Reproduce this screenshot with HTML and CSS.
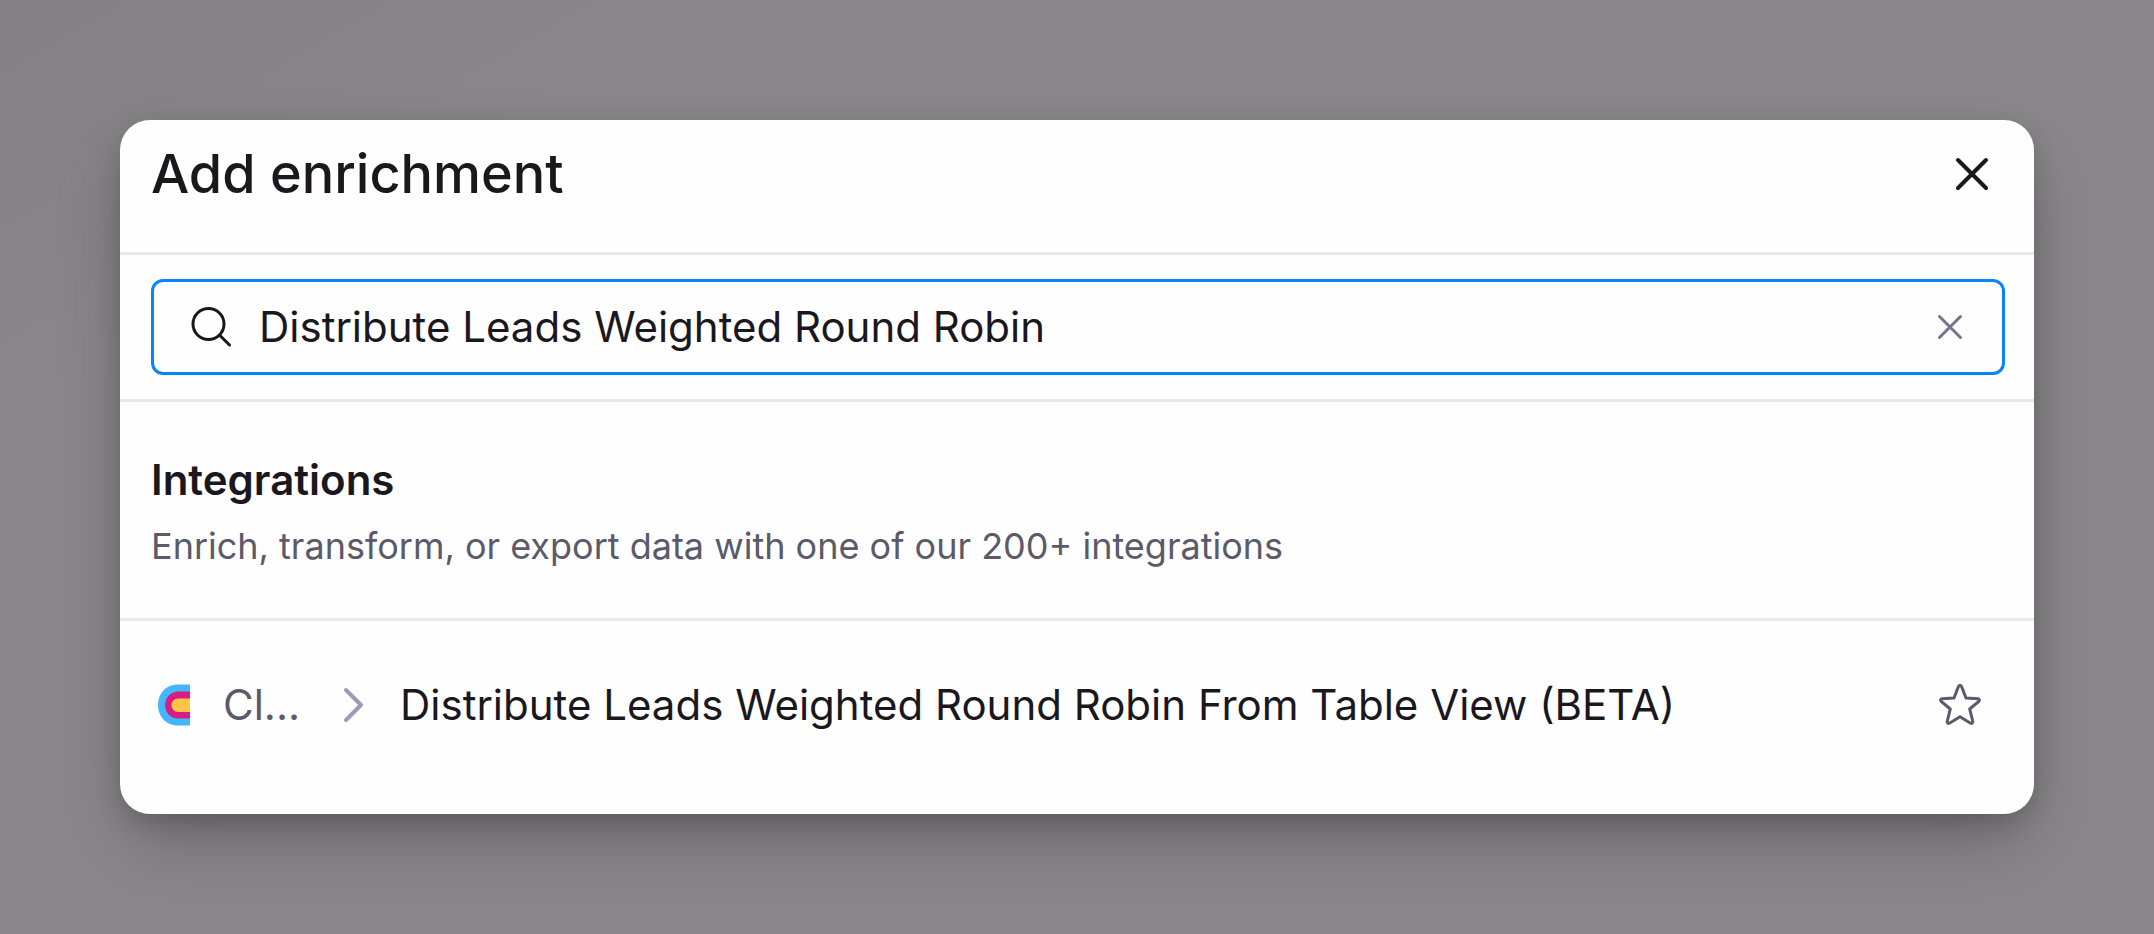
FILE: index.html
```html
<!DOCTYPE html>
<html lang="en">
<head>
<meta charset="utf-8">
<meta name="viewport" content="width=device-width, initial-scale=1">
<title>Add enrichment</title>
<link rel="stylesheet" href="styles.css">
</head>
<body>
<main class="backdrop">
  <section class="dialog" role="dialog" aria-labelledby="dialog-title">
    <header class="dialog-header">
      <h1 class="dialog-title" id="dialog-title">Add enrichment</h1>
      <button class="icon-button close" type="button" aria-label="Close">
        <svg width="40" height="40" viewBox="0 0 40 40"><path d="M6 6 34 34M34 6 6 34"/></svg>
      </button>
    </header>
    <div class="search-section">
      <div class="search-box">
        <label class="search-label" for="search" aria-label="Search enrichments">
          <svg width="42" height="42" viewBox="0 0 42 42"><circle cx="18.500" cy="18" r="15.500"/><path d="M29.500 29 39.500 39"/></svg>
        </label>
        <input class="search-input" id="search" type="text" value="Distribute Leads Weighted Round Robin">
        <button class="icon-button clear" type="button" aria-label="Clear search">
          <svg width="32" height="32" viewBox="0 0 32 32"><path d="M5.500 5.500 26.500 26.500M26.500 5.500 5.500 26.500"/></svg>
        </button>
      </div>
    </div>
    <div class="group-heading">
      <h2 class="group-title">Integrations</h2>
      <p class="group-text">Enrich, transform, or export data with one of our 200+ integrations</p>
    </div>
    <div class="result">
      <svg class="logo" width="32" height="42" viewBox="0 0 32 42">
        <path fill="#42b6ff" d="M32 .5H19.500C8 .5 0 9.500 0 21s8 20.500 19.500 20.500H32z"/>
        <path fill="#d51d84" d="M32 7.500H20.500C12 7.500 7 14 7 21s5 13.500 13.500 13.500H32z"/>
        <path fill="#ffc348" d="M32 14.500H20.500C16 14.500 13.500 17.500 13.500 21s2.500 7 7 7H32z"/>
      </svg>
      <span class="provider">Cl...</span>
      <svg class="chevron" width="22" height="36" viewBox="0 0 22 36"><path d="M3 3 18 18 3 33"/></svg>
      <a class="result-name" href="#">Distribute Leads Weighted Round Robin From Table View (BETA)</a>
      <button class="icon-button star" type="button" aria-label="Add to favorites">
        <svg width="44" height="44" viewBox="0 0 44 44"><path d="M20.500 3.300Q22 1.300 23.500 3.300L28 15 40 15.700Q42.300 16.300 40.900 18.300L31.700 26 34.800 38.300Q34.800 41 32.600 40.200L22 33.800 11.400 40.200Q9.200 41 9.200 38.300L12.300 26 3.100 18.300Q1.700 16.300 4 15.700L16 15Z"/></svg>
      </button>
    </div>
  </section>
</main>
</body>
</html>
```
FILE: styles.css
```css
* {
  box-sizing: border-box;
}

body {
  margin: 0;
  font-family: Inter, "Liberation Sans", sans-serif;
  font-size: 42px;
  line-height: 56px;
  color: #1a181d;
  background: #8a878a;
}

.backdrop {
  min-height: 100vh;
  padding: 120px;
  background: linear-gradient(150deg, #838084, transparent 20%);
}

.dialog {
  border-radius: 30px;
  background: #fefefe;
  box-shadow:
    0 10px 28px -4px rgba(0, 0, 0, 0.2),
    0 32px 72px -8px rgba(0, 0, 0, 0.24);
}

.dialog-header {
  display: flex;
  align-items: center;
  justify-content: space-between;
  padding: 18px 32px 42px 31px;
  border-bottom: 3px solid #e7e6ec;
}

.dialog-title {
  margin: 0;
  font-size: 54px;
  line-height: 72px;
  font-weight: 500;
}

.icon-button {
  display: grid;
  place-items: center;
  padding: 0;
  border: 0;
  background: none;
  color: inherit;
  cursor: pointer;
}

svg {
  display: block;
  flex: none;
  fill: none;
  stroke: currentColor;
  stroke-linecap: round;
  stroke-linejoin: round;
}

.close {
  width: 60px;
  height: 60px;
  stroke-width: 4;
}

.search-section {
  padding: 24px 29px 24px 31px;
  border-bottom: 3px solid #e7e6ec;
}

.search-box {
  display: flex;
  align-items: center;
  height: 96px;
  padding: 0 36px;
  border: 3px solid #0a84fa;
  border-radius: 12px;
}

.search-label {
  stroke-width: 3;
}

.search-input {
  flex: 1;
  min-width: 0;
  height: 56px;
  margin: 0 24px 0 27px;
  padding: 0;
  border: 0;
  outline: 0;
  background: none;
  color: inherit;
  font: inherit;
}

.clear {
  color: #77738f;
  stroke-width: 3;
}

.group-heading {
  padding: 48px 31px;
  border-bottom: 3px solid #e7e6ec;
}

.group-title {
  margin: 0;
  font-size: 42px;
  line-height: 60px;
  font-weight: 600;
}

.group-text {
  margin: 12px 0 0;
  font-size: 36px;
  line-height: 48px;
  color: #5c5a69;
}

.result {
  display: flex;
  align-items: center;
  padding: 56px 52px 81px 38px;
}

.logo {
  stroke: none;
}

.provider {
  width: 80px;
  margin-left: 33px;
  white-space: nowrap;
  color: #5c5a69;
}

.chevron {
  margin: 0 35px 0 40px;
  color: #9e9ab2;
  stroke-width: 4;
}

.result-name {
  flex: 1;
  color: inherit;
  text-decoration: none;
}

.star {
  color: #5c5a69;
  stroke-width: 3;
}
```
